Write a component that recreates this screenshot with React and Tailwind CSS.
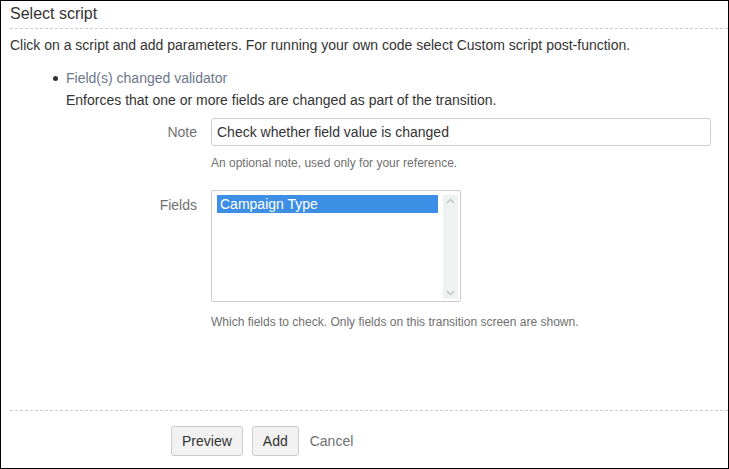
import React from 'react';

const font = { fontFamily: '"Liberation Sans", Arial, sans-serif' };

function Field({ label, help, helpGap, children }) {
  return (
    <div className="flex">
      <div className="w-[210px] shrink-0 pr-[14px] text-right text-[14px] text-[#707070]">{label}</div>
      <div className="flex-1">
        {children}
        <div className={`${helpGap} text-[12px] text-[#707070]`}>{help}</div>
      </div>
    </div>
  );
}

export default function App() {
  return (
    <div
      className="w-[729px] h-[469px] box-border border border-black bg-white text-[#333] flex flex-col"
      style={{ fontFamily: '"Liberation Sans", Arial, sans-serif' }}
    >
      {/* Header */}
      <div className="pl-[9px]">
        <h2 className="pt-[3px] pb-[4px] text-[16px] leading-[20px] text-[#333] border-b border-dashed border-[#ccc]">
          Select script
        </h2>
      </div>
      <p className="pl-[9px] pt-[7px] text-[14px] leading-[18px]">
        Click on a script and add parameters. For running your own code select Custom script post-function.
      </p>

      {/* Selected script */}
      <ul className="mt-[13px] pl-[65px] text-[14px] leading-[22px]">
        <li className="relative">
          <span className="absolute left-[-13px] top-[9px] w-[5px] h-[5px] rounded-full bg-[#333]" />
          <span className="text-[#6b778c]">Field(s) changed validator</span>
          <div>Enforces that one or more fields are changed as part of the transition.</div>
        </li>
      </ul>

      <div className="mt-[7px] flex flex-col gap-[18px]">
        <Field
          label={<span className="leading-[28px]">Note</span>}
          help="An optional note, used only for your reference."
          helpGap="mt-[8px]"
        >
          <input
            readOnly
            value="Check whether field value is changed"
            className="w-[500px] h-[28px] px-[5px] border border-[#ccc] rounded-[3px] text-[14px] text-[#333] outline-none"
            style={font}
          />
        </Field>

        <Field
          label={<span className="block pt-[6px] leading-[18px]">Fields</span>}
          help="Which fields to check. Only fields on this transition screen are shown."
          helpGap="mt-[11px]"
        >
          <div className="flex w-[250px] h-[112px] border border-[#ccc] rounded-[2px] pl-[5px] pt-[4px] pb-[2px]">
            <div className="flex-1">
              <div className="bg-[#3d8fe6] text-white text-[14px] leading-[18px] pl-[3px]">Campaign Type</div>
            </div>
            <div className="w-[15px] ml-[5px] mr-[2px] bg-[#eef2f1] flex flex-col items-center justify-between">
              <svg width="9" height="6" viewBox="0 0 9 6" className="mt-[3px]"><path d="M1 5 L4.5 1.5 L8 5" fill="none" stroke="#c0c4c8" strokeWidth="1.5" /></svg>
              <svg width="9" height="6" viewBox="0 0 9 6" className="mb-[3px]"><path d="M1 1 L4.5 4.5 L8 1" fill="none" stroke="#c0c4c8" strokeWidth="1.5" /></svg>
            </div>
          </div>
        </Field>
      </div>

      <div className="flex-1" />

      {/* Footer */}
      <div className="ml-[9px] border-t border-dashed border-[#ccc] mb-[12px] pt-[15px] pl-[161px] flex items-center gap-[9px]">
        <button className="h-[30px] px-[10px] bg-[#f2f2f2] border border-[#ccc] rounded-[3px] text-[14px] text-[#333]" style={font}>Preview</button>
        <button className="h-[30px] px-[10px] bg-[#f2f2f2] border border-[#ccc] rounded-[3px] text-[14px] text-[#333]" style={font}>Add</button>
        <span className="ml-[2px] text-[14px] text-[#707070]">Cancel</span>
      </div>
    </div>
  );
}
